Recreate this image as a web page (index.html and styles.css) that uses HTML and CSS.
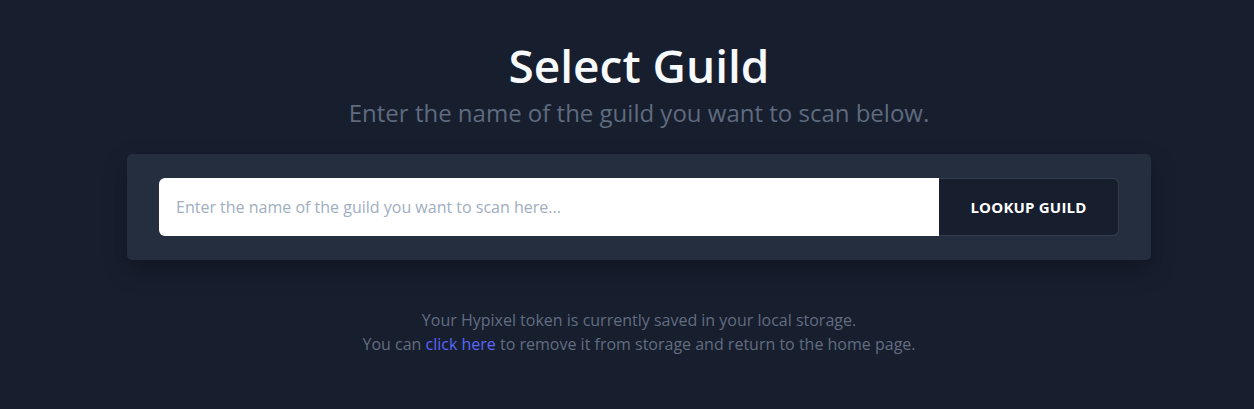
FILE: index.html
```html
<!DOCTYPE html>
<html lang="en">
<head>
<meta charset="utf-8">
<title>Select Guild</title>
<link rel="stylesheet" href="styles.css">
</head>
<body>
<main class="page">
  <header class="head">
    <h1 class="title">Select Guild</h1>
    <p class="subtitle">Enter the name of the guild you want to scan below.</p>
  </header>
  <section class="card">
    <form class="lookup">
      <input class="lookup-input" type="text" placeholder="Enter the name of the guild you want to scan here...">
      <button class="lookup-btn" type="button">LOOKUP GUILD</button>
    </form>
  </section>
  <footer class="note">
    <p>Your Hypixel token is currently saved in your local storage.</p>
    <p>You can <a class="link" href="#">click here</a> to remove it from storage and return to the home page.</p>
  </footer>
</main>
</body>
</html>
```
FILE: styles.css
```css
html, body {
  margin: 0;
  padding: 0;
}
body {
  background: #171e2e;
  font-family: "Open Sans", "Noto Sans", sans-serif;
  color: #fff;
  height: 409px;
  overflow: hidden;
}
.page {
  width: 1024px;
  margin: 0 auto;
  padding: 36px 0 0 24px;
  display: flex;
  flex-direction: column;
}
.head {
  text-align: center;
}
.title {
  margin: 0;
  font-size: 46px;
  line-height: 58px;
  font-weight: 600;
  color: #f7fafc;
}
.subtitle {
  margin: 2px 0 0;
  font-size: 24px;
  line-height: 34px;
  color: #5f6b7e;
}
.card {
  margin-top: 24px;
  background: #252e3e;
  border-radius: 5px;
  padding: 24px 32px;
  box-shadow: 0 10px 25px rgba(0, 0, 0, 0.25);
}
.lookup {
  display: flex;
  height: 58px;
  margin: 0;
}
.lookup-input {
  flex: 1;
  border: 0;
  border-radius: 6px 0 0 6px;
  background: #fff;
  padding: 0 17px;
  font-family: inherit;
  font-size: 16px;
  color: #2d3748;
  outline: none;
}
.lookup-input::placeholder {
  color: #a0aec0;
}
.lookup-btn {
  width: 180px;
  background: #171e2e;
  border: 1px solid #343e50;
  border-left: 0;
  border-radius: 0 6px 6px 0;
  color: #fff;
  font-family: inherit;
  font-weight: 700;
  font-size: 15px;
  letter-spacing: 0.2px;
  cursor: pointer;
}
.note {
  margin-top: 48px;
  text-align: center;
  font-size: 16px;
  line-height: 24px;
  color: #626d80;
}
.note p {
  margin: 0;
}
.link {
  color: #5a67f8;
  text-decoration: none;
}
```
